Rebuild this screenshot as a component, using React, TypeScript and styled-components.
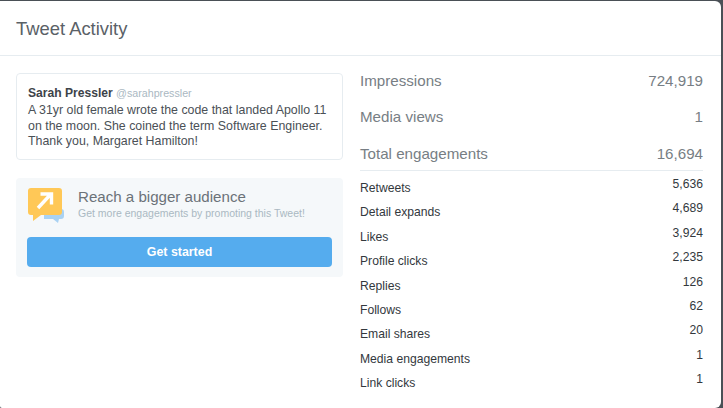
import React from 'react';
import styled, {createGlobalStyle} from "styled-components";

const stats = [
    {label: "Retweets", value: "5,636"},
    {label: "Detail expands", value: "4,689"},
    {label: "Likes", value: "3,924"},
    {label: "Profile clicks", value: "2,235"},
    {label: "Replies", value: "126"},
    {label: "Follows", value: "62"},
    {label: "Email shares", value: "20"},
    {label: "Media engagements", value: "1"},
    {label: "Link clicks", value: "1"},
]

const totals = [
    {label: "Impressions", value: "724,919"},
    {label: "Media views", value: "1"},
    {label: "Total engagements", value: "16,694"},
]

const PromoIcon = () => (
    <svg width="38" height="36" viewBox="0 0 38 36">
        <path d="M17 21h17a3 3 0 0 1 3 3v4a3 3 0 0 1-3 3h-2l-1 4-5-4h-9z" fill="#a9d2f3"/>
        <path d="M4 0h28a3 3 0 0 1 3 3v21a3 3 0 0 1-3 3H14l-8 6v-6H4a3 3 0 0 1-3-3V3a3 3 0 0 1 3-3z" fill="#ffc857"/>
        <path d="M11 20L23.500 6.500M13.500 6h11v10.500" fill="none" stroke="#fff" strokeWidth="3.400"/>
    </svg>
)

const App = () => {
    return (
        <Modal>
            <GlobalStyle/>
            <Header>Tweet Activity</Header>
            <Body>
                <LeftColumn>
                    <TweetCard>
                        <Author>Sarah Pressler <Handle>@sarahpressler</Handle></Author>
                        <TweetText>
                            A 31yr old female wrote the code that landed Apollo 11<br/>
                            on the moon. She coined the term Software Engineer.<br/>
                            Thank you, Margaret Hamilton!
                        </TweetText>
                    </TweetCard>
                    <Promo>
                        <PromoTop>
                            <PromoIcon/>
                            <div>
                                <PromoTitle>Reach a bigger audience</PromoTitle>
                                <PromoText>Get more engagements by promoting this Tweet!</PromoText>
                            </div>
                        </PromoTop>
                        <StartButton>Get started</StartButton>
                    </Promo>
                </LeftColumn>
                <RightColumn>
                    <Totals>
                        {totals.map(t => (
                            <TotalRow key={t.label}>
                                <span>{t.label}</span>
                                <span>{t.value}</span>
                            </TotalRow>
                        ))}
                    </Totals>
                    {stats.map(s => (
                        <StatRow key={s.label}>
                            <StatLabel>{s.label}</StatLabel>
                            <span>{s.value}</span>
                        </StatRow>
                    ))}
                </RightColumn>
            </Body>
        </Modal>
    );
};

export default App;

const GlobalStyle = createGlobalStyle`
  html, body {
    margin: 0;
    background: #4a5056;
  }

  body {
    font-family: "Liberation Sans", Arial, sans-serif;
    width: 723px;
    height: 408px;
    overflow: hidden;
  }
`
const Modal = styled.div`
  box-sizing: border-box;
  width: 721px;
  height: 407px;
  margin-top: 1px;
  background: #fff;
  border-radius: 0 6px 6px 2px;
  overflow: hidden;
`
const Header = styled.h2`
  box-sizing: border-box;
  height: 55px;
  margin: 0;
  padding: 17px 16px 0;
  border-bottom: 1px solid #e6ecf0;
  font-size: 18.400px;
  line-height: 21px;
  font-weight: 400;
  color: #5a6167;
`
const Body = styled.div`
  display: flex;
  gap: 17px;
  padding: 0 18px 0 16px;
`
const LeftColumn = styled.div`
  width: 327px;
  padding-top: 17px;
  display: flex;
  flex-direction: column;
  gap: 18px;
`
const TweetCard = styled.div`
  box-sizing: border-box;
  height: 87px;
  padding: 11px 11px 0;
  border: 1px solid #e6ecf0;
  border-radius: 4px;
`
const Author = styled.div`
  font-size: 12.100px;
  line-height: 16px;
  font-weight: 700;
  color: #3d4349;
`
const Handle = styled.span`
  font-size: 10.700px;
  font-weight: 400;
  color: #aab8c2;
`
const TweetText = styled.p`
  margin: 2px 0 0;
  font-size: 12.380px;
  line-height: 15.500px;
  color: #4a5056;
  white-space: nowrap;
`
const Promo = styled.div`
  box-sizing: border-box;
  height: 99px;
  padding: 10px 11px 0;
  background: #f5f8fa;
  border-radius: 4px;
`
const PromoTop = styled.div`
  display: flex;
  gap: 13px;
  height: 49px;
`
const PromoTitle = styled.div`
  font-size: 15.100px;
  line-height: 18px;
  color: #6b7278;
`
const PromoText = styled.div`
  font-size: 10.500px;
  line-height: 14px;
  color: #aab8c2;
  white-space: nowrap;
`
const StartButton = styled.button`
  display: block;
  width: 100%;
  height: 30px;
  padding: 0;
  border: none;
  border-radius: 4px;
  background: #55acee;
  color: #fff;
  font-family: inherit;
  font-size: 12.400px;
  font-weight: 700;
`
const RightColumn = styled.div`
  flex: 1;
  padding-top: 14px;
`
const Totals = styled.div`
  display: flex;
  flex-direction: column;
  gap: 16.500px;
  padding-bottom: 7px;
  margin-bottom: 5px;
  border-bottom: 1px solid #e6ecf0;
`
const TotalRow = styled.div`
  display: flex;
  justify-content: space-between;
  align-items: center;
  height: 20px;
  font-size: 15.150px;
  color: #777e84;
`
const StatRow = styled.div`
  display: flex;
  justify-content: space-between;
  align-items: flex-start;
  height: 24.400px;
  font-size: 12.150px;
  line-height: 16px;
  color: #33383d;
`
const StatLabel = styled.span`
  padding-top: 4px;
`
